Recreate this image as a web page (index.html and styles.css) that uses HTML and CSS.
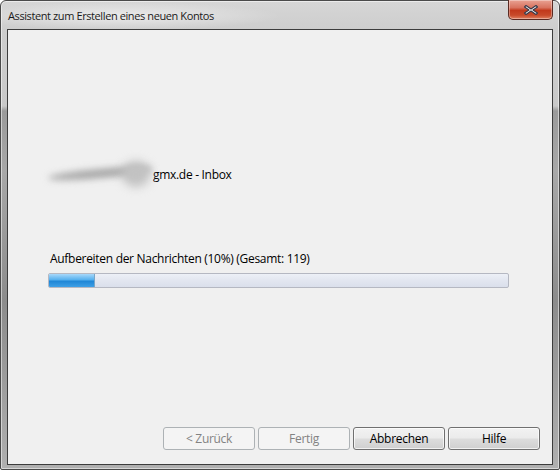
FILE: index.html
```html
<!DOCTYPE html>
<html>
<head>
<meta charset="utf-8">
<link rel="stylesheet" href="styles.css">
</head>
<body>
<div class="window">
  <div class="titlebar">
    <span class="title">Assistent zum Erstellen eines neuen Kontos</span>
    <div class="close">
      <svg width="16" height="12" viewBox="0 0 16 12"><path d="M3 1.5 L8 5 L13 1.5 L14.5 3 L10 6 L14.5 9 L13 10.5 L8 7 L3 10.5 L1.5 9 L6 6 L1.5 3 Z" fill="#fff" stroke="#3b3b4a" stroke-width="1.2" stroke-linejoin="round"/></svg>
    </div>
  </div>
  <div class="content">
    <div class="account">
      <div class="smudge"><div class="smudge-blob"></div></div>
      <span class="acct-text">gmx.de - Inbox</span>
    </div>
    <div class="status">Aufbereiten der Nachrichten (10%) (Gesamt: 119)</div>
    <div class="progress"><div class="fill" style="width:10%"></div></div>
    <div class="buttons">
      <button class="btn disabled">&lt; Zurück</button>
      <button class="btn disabled">Fertig</button>
      <button class="btn">Abbrechen</button>
      <button class="btn">Hilfe</button>
    </div>
  </div>
</div>
</body>
</html>
```

FILE: styles.css
```css
html, body {
  margin: 0;
  padding: 0;
  background: #ffffff;
}
body {
  width: 560px;
  height: 470px;
  overflow: hidden;
  font-family: "Open Sans", "Noto Sans", sans-serif;
  font-size: 12px;
}
.window {
  position: relative;
  box-sizing: border-box;
  width: 560px;
  height: 470px;
  border: 1px solid #4a4a4a;
  border-radius: 6px 6px 2px 2px;
  background: linear-gradient(to bottom, #d6d6d6 0px, #cdcdcd 30px, #c9c9c9 105px, #9a9a9a 110px, #a8a8a8 170px, #8c8c8c 300px, #b0b0b0 470px);
  padding: 0 6px 4px 6px;
  display: flex;
  flex-direction: column;
  box-shadow: inset 0 0 0 1px rgba(255,255,255,0.5);
}
.titlebar {
  height: 28px;
  display: flex;
  align-items: center;
  background: radial-gradient(ellipse 160px 14px at 120px 15px, rgba(255,255,255,0.55), rgba(255,255,255,0));
  margin: 0 -6px;
  padding-left: 7px;
}
.title {
  color: #1a1a1a;
  font-size: 11px;
  letter-spacing: -0.4px;
  padding-top: 1px;
}
.close {
  position: absolute;
  top: -1px;
  right: 6px;
  width: 45px;
  height: 20px;
  box-sizing: border-box;
  border: 1px solid #5a2a22;
  border-top: none;
  border-radius: 0 0 5px 5px;
  background: linear-gradient(to bottom, #e9a293 0%, #d8735f 40%, #c2391c 55%, #c84a2a 80%, #e08060 100%);
  display: flex;
  align-items: center;
  justify-content: center;
  box-shadow: inset 0 0 0 1px rgba(255,255,255,0.35);
}
.content {
  flex: 1;
  box-sizing: border-box;
  border: 1px solid #3c3c3c;
  background: #f0f0f0;
  display: flex;
  flex-direction: column;
  padding: 0 12px 14px 40px;
  color: #000;
  letter-spacing: -0.3px;
}
.account {
  display: flex;
  align-items: center;
  margin-top: 132px;
  height: 24px;
}
.smudge {
  position: relative;
  width: 100px;
  height: 10px;
  margin-right: 5px;
}
.smudge::before {
  content: "";
  position: absolute;
  left: 0;
  top: 0px;
  width: 104px;
  height: 9px;
  border-radius: 50% 40% 40% 50%;
  background: #a6a6a6;
  filter: blur(3.5px);
  transform: rotate(-5deg);
}
.smudge-blob {
  position: absolute;
  right: -2px;
  top: -8px;
  width: 28px;
  height: 26px;
  border-radius: 50%;
  background: #c2c2c2;
  filter: blur(5px);
}
.status {
  margin-top: 64px;
  margin-left: 2px;
  height: 18px;
  line-height: 18px;
}
.progress {
  margin-top: 5px;
  width: 461px;
  height: 15px;
  box-sizing: border-box;
  border: 1px solid #b5b8c2;
  border-radius: 2px;
  background: linear-gradient(to bottom, #edf0f7 0%, #e2e6f0 50%, #dadfeb 100%);
  overflow: hidden;
}
.fill {
  height: 100%;
  background: linear-gradient(to bottom, #a8d8fa 0%, #55b0ee 45%, #1f86d6 55%, #3ea0e6 100%);
  border-right: 1px solid #7aa7c8;
  box-sizing: border-box;
}
.buttons {
  margin-top: auto;
  display: flex;
  justify-content: flex-end;
  gap: 3px;
}
.btn {
  width: 92px;
  height: 23px;
  box-sizing: border-box;
  border: 1px solid #707070;
  border-radius: 3px;
  background: linear-gradient(to bottom, #f2f2f2 0%, #ebebeb 48%, #dddddd 52%, #cfcfcf 100%);
  box-shadow: inset 0 0 0 1px rgba(255,255,255,0.7);
  font-family: "Open Sans", "Noto Sans", sans-serif;
  font-size: 12px;
  letter-spacing: -0.3px;
  color: #000;
  padding: 0;
}
.btn.disabled {
  border-color: #adb2b5;
  background: #f4f4f4;
  color: #838383;
  box-shadow: none;
}
```
